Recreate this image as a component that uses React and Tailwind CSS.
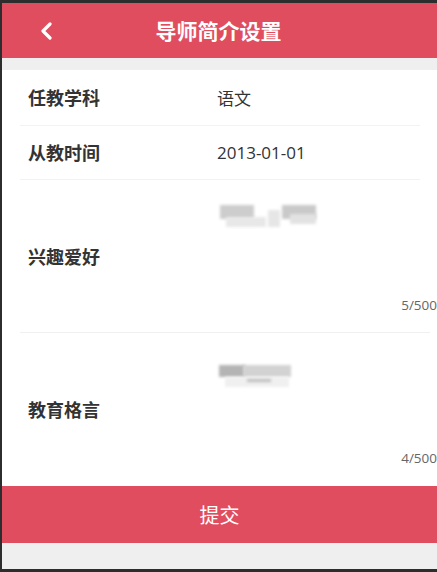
import React from "react";

const font = { fontFamily: '"Noto Sans CJK SC", "Noto Sans", sans-serif' };

function Blur({ blocks }) {
  return (
    <div className="relative h-[30px] w-[120px]">
      {blocks.map((b, i) => (
        <div
          key={i}
          className="absolute blur-[1.5px]"
          style={{ left: b[0], top: b[1], width: b[2], height: b[3], background: b[4] }}
        />
      ))}
    </div>
  );
}

export default function App() {
  return (
    <div className="w-[437px] h-[572px] bg-[#2d2d2d] pt-[3px] pl-[2px] pb-[3px] overflow-hidden" style={font}>
      <div className="h-full bg-[#efefef] flex flex-col">
        <div className="h-[55px] bg-[#df4d5f] flex items-center relative shrink-0">
          <svg className="absolute left-[37px] top-[19px]" width="14" height="18" viewBox="0 0 14 18">
            <path d="M11 2 L4 9 L11 16" fill="none" stroke="white" strokeWidth="3.2" strokeLinecap="round" strokeLinejoin="round" />
          </svg>
          <div className="w-full text-center text-white text-[21px] font-bold leading-none pr-[2px]">导师简介设置</div>
        </div>
        <div className="h-[12px] shrink-0" />
        <div className="bg-white flex flex-col shrink-0">
          <div className="ml-[18px] mr-[17px] h-[56px] border-b border-[#f2f2f2] flex items-center">
            <div className="pl-[8px] w-[197px] text-[18px] font-bold text-[#333]">任教学科</div>
            <div className="text-[17px] text-[#333]">语文</div>
          </div>
          <div className="ml-[18px] mr-[17px] h-[54px] border-b border-[#f2f2f2] flex items-center">
            <div className="pl-[8px] w-[197px] text-[18px] font-bold text-[#333]">从教时间</div>
            <div className="text-[17px] text-[#333]" style={{ fontFamily: '"Open Sans", "Noto Sans", sans-serif' }}>2013-01-01</div>
          </div>
          <div className="h-[153px] relative flex items-center">
            <div className="ml-[26px] text-[18px] font-bold text-[#333]">兴趣爱好</div>
            <div className="absolute left-[216px] top-[22px]">
              <Blur
                blocks={[
                  [2, 3, 34, 14, "#cdcdcd"],
                  [8, 15, 40, 10, "#e8e8e8"],
                  [50, 8, 12, 17, "#e6e6e6"],
                  [64, 3, 34, 14, "#c9c9c9"],
                  [72, 12, 26, 10, "#e2e2e2"],
                ]}
              />
            </div>
            <div className="absolute right-0 bottom-[18px] text-[13.5px] text-[#666]" style={{ fontFamily: '"Open Sans", sans-serif' }}>5/500</div>
            <div className="absolute left-[18px] right-[7px] bottom-0 border-b border-[#f0f0f0]" />
          </div>
          <div className="h-[153px] relative flex items-center">
            <div className="ml-[26px] text-[18px] font-bold text-[#333]">教育格言</div>
            <div className="absolute left-[215px] top-[28px]">
              <Blur
                blocks={[
                  [2, 4, 26, 12, "#b4b4b4"],
                  [26, 4, 48, 12, "#d2d2d2"],
                  [8, 16, 64, 10, "#f0f0f0"],
                  [30, 18, 24, 3, "#bdbdbd"],
                ]}
              />
            </div>
            <div className="absolute right-0 bottom-[18px] text-[13.5px] text-[#666]" style={{ fontFamily: '"Open Sans", sans-serif' }}>4/500</div>
          </div>
        </div>
        <div className="h-[57px] bg-[#df4d5f] flex items-center justify-center shrink-0">
          <span className="text-white text-[20px]">提交</span>
        </div>
        <div className="flex-1" />
      </div>
    </div>
  );
}
